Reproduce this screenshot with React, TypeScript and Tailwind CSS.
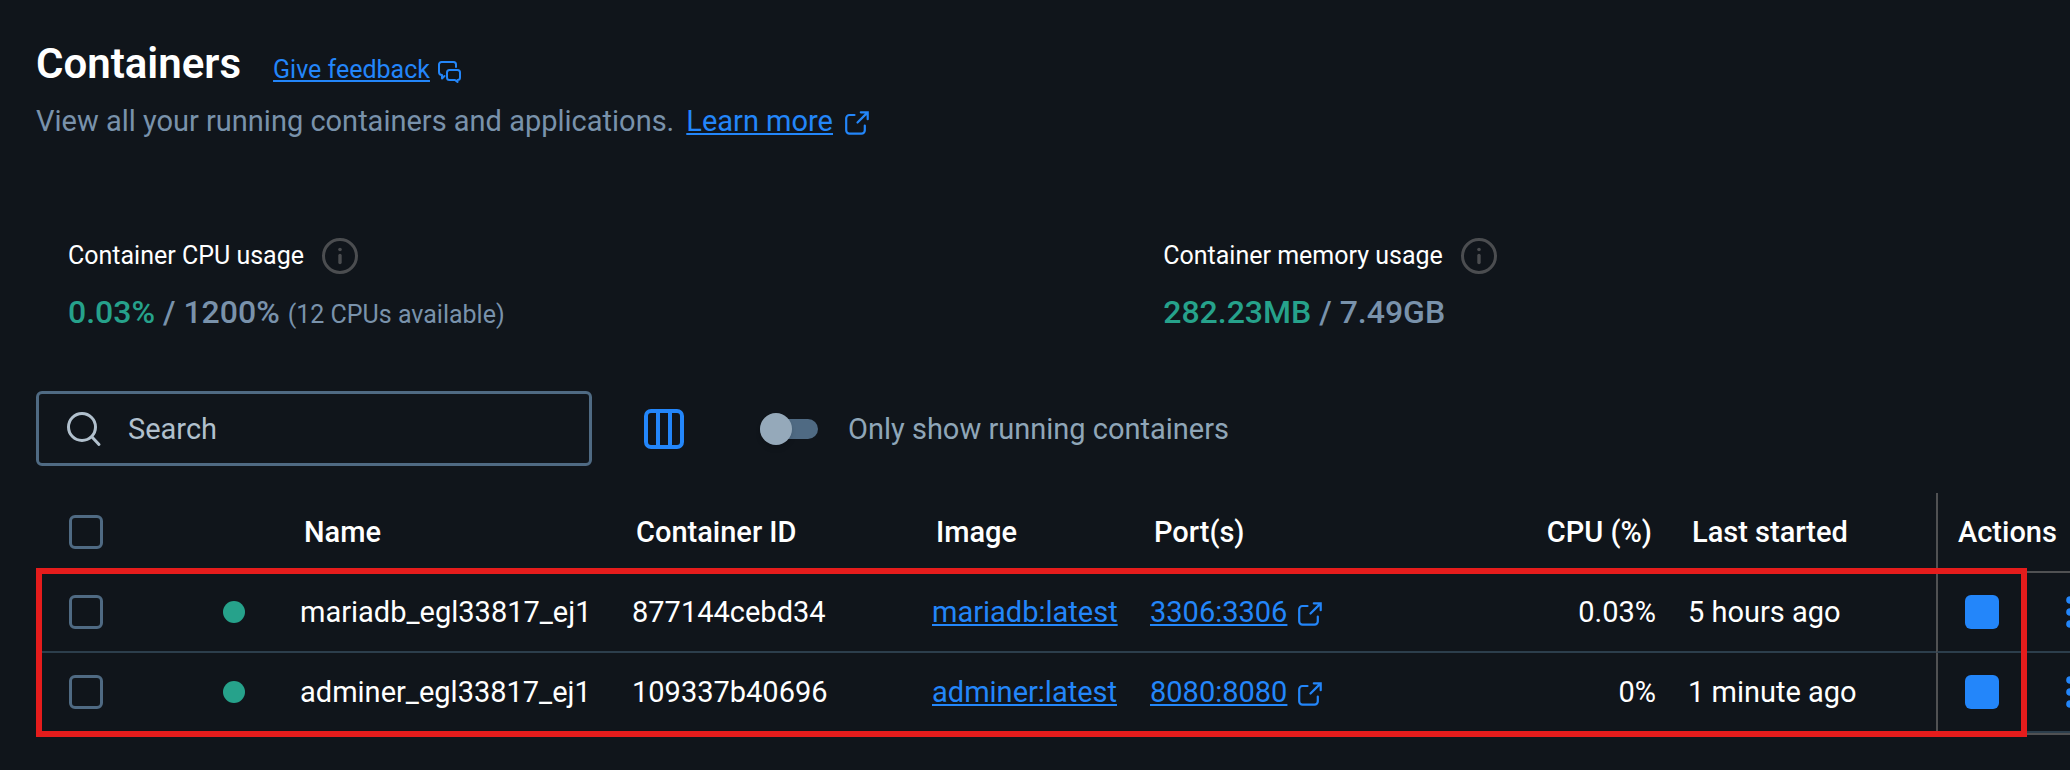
import type { ReactNode } from "react";

type Container = {
  name: string;
  id: string;
  image: string;
  ports: string;
  cpu: string;
  started: string;
};

const containers: Container[] = [
  {
    name: "mariadb_egl33817_ej1",
    id: "877144cebd34",
    image: "mariadb:latest",
    ports: "3306:3306",
    cpu: "0.03%",
    started: "5 hours ago",
  },
  {
    name: "adminer_egl33817_ej1",
    id: "109337b40696",
    image: "adminer:latest",
    ports: "8080:8080",
    cpu: "0%",
    started: "1 minute ago",
  },
];

const linkClass =
  "text-[#2386fa] underline decoration-2 underline-offset-2";

function FeedbackIcon() {
  return (
    <svg className="mt-1" width="23" height="22" viewBox="0 0 23 22" fill="none" stroke="currentColor" strokeWidth="2" strokeLinejoin="round" strokeLinecap="round" aria-hidden="true">
      <path d="M18 6V3.5A2.5 2.5 0 0 0 15.5 1H3.5A2.5 2.5 0 0 0 1 3.5v7.5a3 3 0 0 0 3 3v3.5l2.5-2.5" />
      <path d="M11.5 9h8a2.5 2.5 0 0 1 2.5 2.5v5a2.5 2.5 0 0 1-2.5 2.5v2l-2.5-2h-5.5a2.5 2.5 0 0 1-2.5-2.5v-5a2.5 2.5 0 0 1 2.5-2.5z" />
    </svg>
  );
}

function ExternalIcon() {
  return (
    <svg className="mt-1" width="24" height="24" viewBox="0 0 24 24" fill="none" stroke="currentColor" strokeWidth="2.2" strokeLinecap="round" aria-hidden="true">
      <path d="M9.5 4H4.5A3.3 3.3 0 0 0 1.2 7.3v12A3.3 3.3 0 0 0 4.5 22.6h12a3.3 3.3 0 0 0 3.3-3.3V14.5" />
      <path d="M15.8 1.3h6.9v6.9M22.4 1.6L12.5 11.5" />
    </svg>
  );
}

function InfoIcon() {
  return (
    <svg width="36" height="36" viewBox="0 0 36 36" fill="none" aria-hidden="true">
      <circle cx="18" cy="18" r="16.5" stroke="#4b4d50" strokeWidth="3" />
      <circle cx="18" cy="11.5" r="1.8" fill="#4b4d50" />
      <path d="M18 17.5v7" stroke="#4b4d50" strokeWidth="3.4" strokeLinecap="round" />
    </svg>
  );
}

function Stat({ label, children }: { label: string; children: ReactNode }) {
  return (
    <section className="pl-8">
      <div className="flex h-9 items-center gap-[18px]">
        <h2 className="text-[25px] leading-8">{label}</h2>
        <button type="button" aria-label={`About ${label}`}>
          <InfoIcon />
        </button>
      </div>
      <p className="mt-[18px] text-[32px] leading-10 font-medium text-[#7992ab]">{children}</p>
    </section>
  );
}

function Tick({ label }: { label: string }) {
  return (
    <input
      type="checkbox"
      aria-label={label}
      className="block size-[34px] appearance-none rounded-[6px] border-3 border-[#4f6a83] checked:bg-[#2386fa]"
    />
  );
}

export default function App() {
  return (
    <main className="min-h-screen overflow-x-hidden bg-[#10151b] pt-[39px] pb-[35px] pl-9 font-[Roboto,sans-serif] text-white">
      <header>
        <div className="flex items-baseline gap-8">
          <h1 className="text-[42px] leading-[50px] font-semibold">Containers</h1>
          <div className="flex items-center gap-2 text-[#2386fa]">
            <a href="#feedback" className={`text-[25px] leading-8 ${linkClass}`}>
              Give feedback
            </a>
            <FeedbackIcon />
          </div>
        </div>
        <div className="mt-4 flex items-center gap-3 text-[29px] leading-8 text-[#7992ab]">
          <p>View all your running containers and applications.</p>
          <a href="#learn" className={linkClass}>
            Learn more
          </a>
          <span className="text-[#2386fa]">
            <ExternalIcon />
          </span>
        </div>
      </header>

      <div className="mt-[101px] grid grid-cols-[7fr_6fr]">
        <Stat label="Container CPU usage">
          <span className="text-[#26a28b]">0.03%</span> / 1200%{" "}
          <span className="text-[25px] font-normal">(12 CPUs available)</span>
        </Stat>
        <Stat label="Container memory usage">
          <span className="text-[#26a28b]">282.23MB</span> / 7.49GB
        </Stat>
      </div>

      <div className="mt-14 flex items-center">
        <label className="flex h-[75px] w-[556px] items-center gap-[26px] rounded-[6px] border-3 border-[#4f6a83] px-[27px]">
          <svg width="36" height="36" viewBox="0 0 36 36" fill="none" stroke="#b1c0cd" strokeWidth="3" strokeLinecap="round" aria-hidden="true">
            <circle cx="16" cy="16" r="13.5" />
            <path d="M26 26l7 7.5" />
          </svg>
          <input
            type="text"
            placeholder="Search"
            aria-label="Search"
            className="min-w-0 flex-1 bg-transparent text-[29px] leading-9 outline-none placeholder:text-[#b1c0cd]"
          />
        </label>
        <button type="button" aria-label="Choose columns" className="ml-13">
          <svg width="40" height="40" viewBox="0 0 40 40" fill="none" stroke="#2386fa" strokeWidth="4" aria-hidden="true">
            <rect x="2" y="2" width="36" height="36" rx="5" />
            <path d="M14 2v36M26 2v36" />
          </svg>
        </button>
        <label className="ml-[76px] flex items-center gap-[30px] text-[29px] leading-9 text-[#8fa6b8]">
          <input
            type="checkbox"
            role="switch"
            className="flex h-5 w-[58px] appearance-none items-center rounded-full bg-[#4f6a83] before:size-8 before:shrink-0 before:rounded-full before:bg-[#95a9ba] before:shadow-md checked:justify-end checked:before:bg-[#2386fa]"
          />
          Only show running containers
        </label>
      </div>

      <div className="relative mt-[27px]">
        <table className="w-full table-fixed border-separate border-spacing-0 text-left text-[29px] leading-9 whitespace-nowrap">
          <colgroup>
            <col className="w-[100px]" />
            <col className="w-[144px]" />
            <col className="w-[332px]" />
            <col className="w-[300px]" />
            <col className="w-[218px]" />
            <col />
            <col className="w-[140px]" />
            <col className="w-[268px]" />
            <col className="w-[134px]" />
          </colgroup>
          <thead>
            <tr className="h-20 *:border-b-2 *:border-[#505153] *:p-0 *:pl-6 *:font-medium">
              <td>
                <div className="pl-[9px]">
                  <Tick label="Select all containers" />
                </div>
              </td>
              <td />
              <th scope="col">Name</th>
              <th scope="col">Container ID</th>
              <th scope="col">Image</th>
              <th scope="col">Port(s)</th>
              <th scope="col">
                <div className="flex justify-end pr-4">CPU (%)</div>
              </th>
              <th scope="col">Last started</th>
              <th scope="col" className="border-l-2">
                <div className="-ml-1">Actions</div>
              </th>
            </tr>
          </thead>
          <tbody>
            {containers.map((c) => (
              <tr key={c.id} className="h-20 *:border-b-2 *:border-b-[#2c3e4c] *:p-0 *:pl-5">
                <td>
                  <div className="pl-[13px]">
                    <Tick label={`Select ${c.name}`} />
                  </div>
                </td>
                <td>
                  <div className="ml-[67px] size-[22px] rounded-full bg-[#26a28b]" />
                </td>
                <td>{c.name}</td>
                <td>{c.id}</td>
                <td>
                  <a href="#image" className={linkClass}>
                    {c.image}
                  </a>
                </td>
                <td>
                  <div className="flex items-center gap-[11px] text-[#2386fa]">
                    <a href="#port" className={linkClass}>
                      {c.ports}
                    </a>
                    <ExternalIcon />
                  </div>
                </td>
                <td>
                  <div className="pr-3 text-right">{c.cpu}</div>
                </td>
                <td>{c.started}</td>
                <td className="border-l-2 border-l-[#505153]">
                  <div className="flex items-center gap-[67px] pl-[7px]">
                    <button type="button" aria-label={`Stop ${c.name}`} className="size-[34px] shrink-0 rounded-[6px] bg-[#2386fa]" />
                    <button type="button" aria-label={`More actions for ${c.name}`} className="shrink-0">
                      <svg width="8" height="32" viewBox="0 0 8 32" fill="#2386fa" aria-hidden="true">
                        <circle cx="4" cy="4" r="3.8" />
                        <circle cx="4" cy="16" r="3.8" />
                        <circle cx="4" cy="28" r="3.8" />
                      </svg>
                    </button>
                  </div>
                </td>
              </tr>
            ))}
          </tbody>
        </table>
        <div className="h-0.5 bg-[#505153]" />
        <div className="pointer-events-none absolute top-[75px] right-[43px] -bottom-0.5 left-0 border-6 border-[#e51c1c]" />
      </div>
    </main>
  );
}
